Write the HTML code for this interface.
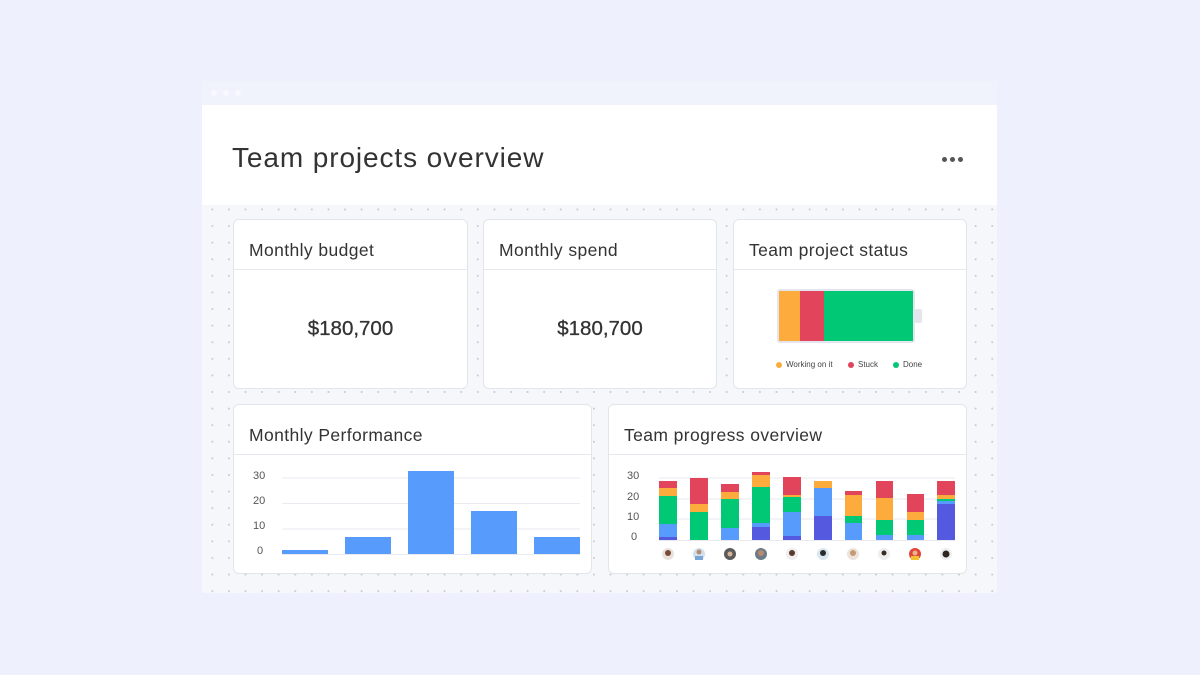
<!DOCTYPE html>
<html><head><meta charset="utf-8"><style>
*{margin:0;padding:0;box-sizing:border-box}
body{width:1200px;height:675px;background:#eef1fd;font-family:"Liberation Sans",sans-serif;color:#323338;position:relative;overflow:hidden}
.frame{position:absolute;left:202px;top:81px;width:795px;height:512px;background:#f6f7fb;background-image:radial-gradient(circle,#c9cbd6 0.8px,transparent 1.2px);background-size:16.6px 16.6px;background-position:2px 4px}
.topbar{position:absolute;left:202px;top:81px;width:795px;height:24px;background:#f0f3fc}
.dot{position:absolute;top:90px;width:6px;height:6px;border-radius:50%;background:#f8f9fe}
.header{position:absolute;left:202px;top:105px;width:795px;height:100px;background:#fff}
.title{position:absolute;left:232px;top:142px;font-size:28px;font-weight:300;letter-spacing:0.9px;color:#333}
.md{position:absolute;top:157px;width:5px;height:5px;border-radius:50%;background:#555}
.card{position:absolute;background:#fff;border:1px solid #e3e5ec;border-radius:6px}
.card h3{position:absolute;left:15px;top:20px;font-size:17.5px;font-weight:400;color:#333;letter-spacing:0.4px;white-space:nowrap}
.card .hr{position:absolute;left:0;right:0;top:49px;height:1px;background:#e6e8ee}
.val{position:absolute;left:0;right:0;top:97px;text-align:center;font-size:20.5px;color:#333;-webkit-text-stroke:0.3px #333}
.lg{position:absolute;top:360px;font-size:8px;color:#444}
.lg i{display:inline-block;width:6px;height:6px;border-radius:50%;margin-right:4px;vertical-align:-0.5px}
</style></head><body>
<div class="frame"></div>
<div class="topbar"></div>
<div class="dot" style="left:211px"></div><div class="dot" style="left:223px"></div><div class="dot" style="left:235px"></div>
<div class="header"></div>
<div class="title">Team projects overview</div>
<div class="md" style="left:942px"></div><div class="md" style="left:950px"></div><div class="md" style="left:958px"></div>

<div class="card" style="left:233px;top:219px;width:235px;height:170px"><h3>Monthly budget</h3><div class="hr"></div><div class="val">$180,700</div></div>
<div class="card" style="left:483px;top:219px;width:234px;height:170px"><h3>Monthly spend</h3><div class="hr"></div><div class="val">$180,700</div></div>
<div class="card" style="left:733px;top:219px;width:234px;height:170px"><h3>Team project status</h3><div class="hr"></div></div>
<svg style="position:absolute;left:0;top:0" width="1200" height="675">
<rect x="777" y="289" width="138" height="54" rx="3" fill="#e4e6ee"/>
<rect x="779" y="291" width="21" height="50" fill="#fdab3d"/>
<rect x="800" y="291" width="24" height="50" fill="#e2445c"/>
<rect x="824" y="291" width="89" height="50" fill="#00c875"/>
<rect x="914" y="309" width="8" height="14" rx="2" fill="#e4e6ee"/>
</svg>
<div class="lg" style="left:776px"><i style="background:#fdab3d"></i>Working on it</div>
<div class="lg" style="left:848px"><i style="background:#e2445c"></i>Stuck</div>
<div class="lg" style="left:893px"><i style="background:#00c875"></i>Done</div>

<div class="card" style="left:233px;top:404px;width:359px;height:170px"><h3>Monthly Performance</h3><div class="hr"></div></div>
<div class="card" style="left:608px;top:404px;width:359px;height:170px"><h3>Team progress overview</h3><div class="hr"></div></div>

<svg style="position:absolute;left:0;top:0" width="1200" height="675" font-family="Liberation Sans, sans-serif" font-size="11" fill="#555">
<g stroke="#e8eaf0" stroke-width="1">
<line x1="282" x2="580" y1="478" y2="478"/><line x1="282" x2="580" y1="503.5" y2="503.5"/><line x1="282" x2="580" y1="529" y2="529"/><line x1="282" x2="580" y1="554.5" y2="554.5"/>
</g>
<text x="253" y="479">30</text><text x="253" y="504">20</text><text x="253" y="529">10</text><text x="257" y="554">0</text>
<g fill="#579bfc">
<rect x="282" y="550" width="46" height="4"/>
<rect x="345" y="537" width="46" height="17"/>
<rect x="408" y="471" width="46" height="83"/>
<rect x="471" y="511" width="46" height="43"/>
<rect x="534" y="537" width="46" height="17"/>
</g>
<g stroke="#e8eaf0"><line x1="659" x2="955" y1="478" y2="478"/><line x1="659" x2="955" y1="499" y2="499"/><line x1="659" x2="955" y1="519" y2="519"/><line x1="659" x2="955" y1="540.5" y2="540.5"/></g>
<text x="627" y="479">30</text><text x="627" y="500">20</text><text x="627" y="520">10</text><text x="631" y="540">0</text>
</svg>
<svg style="position:absolute;left:0;top:0" width="1200" height="675">
<rect x="659" y="481" width="18" height="7" fill="#e2445c"/><rect x="659" y="488" width="18" height="8" fill="#fdab3d"/><rect x="659" y="496" width="18" height="28" fill="#00c875"/><rect x="659" y="524" width="18" height="13" fill="#579bfc"/><rect x="659" y="537" width="18" height="3" fill="#5559df"/>
<rect x="690" y="478" width="18" height="26" fill="#e2445c"/><rect x="690" y="504" width="18" height="8" fill="#fdab3d"/><rect x="690" y="512" width="18" height="28" fill="#00c875"/>
<rect x="721" y="484" width="18" height="8" fill="#e2445c"/><rect x="721" y="492" width="18" height="7" fill="#fdab3d"/><rect x="721" y="499" width="18" height="29" fill="#00c875"/><rect x="721" y="528" width="18" height="12" fill="#579bfc"/>
<rect x="752" y="472" width="18" height="3" fill="#e2445c"/><rect x="752" y="475" width="18" height="12" fill="#fdab3d"/><rect x="752" y="487" width="18" height="36" fill="#00c875"/><rect x="752" y="523" width="18" height="4" fill="#579bfc"/><rect x="752" y="527" width="18" height="13" fill="#5559df"/>
<rect x="783" y="477" width="18" height="18" fill="#e2445c"/><rect x="783" y="495" width="18" height="2" fill="#fdab3d"/><rect x="783" y="497" width="18" height="15" fill="#00c875"/><rect x="783" y="512" width="18" height="24" fill="#579bfc"/><rect x="783" y="536" width="18" height="4" fill="#5559df"/>
<rect x="814" y="481" width="18" height="7" fill="#fdab3d"/><rect x="814" y="488" width="18" height="28" fill="#579bfc"/><rect x="814" y="516" width="18" height="24" fill="#5559df"/>
<rect x="845" y="491" width="17" height="4" fill="#e2445c"/><rect x="845" y="495" width="17" height="21" fill="#fdab3d"/><rect x="845" y="516" width="17" height="7" fill="#00c875"/><rect x="845" y="523" width="17" height="17" fill="#579bfc"/>
<rect x="876" y="481" width="17" height="17" fill="#e2445c"/><rect x="876" y="498" width="17" height="22" fill="#fdab3d"/><rect x="876" y="520" width="17" height="15" fill="#00c875"/><rect x="876" y="535" width="17" height="5" fill="#579bfc"/>
<rect x="907" y="494" width="17" height="18" fill="#e2445c"/><rect x="907" y="512" width="17" height="8" fill="#fdab3d"/><rect x="907" y="520" width="17" height="15" fill="#00c875"/><rect x="907" y="535" width="17" height="5" fill="#579bfc"/>
<rect x="937" y="481" width="18" height="14" fill="#e2445c"/><rect x="937" y="495" width="18" height="4" fill="#fdab3d"/><rect x="937" y="499" width="18" height="2" fill="#00c875"/><rect x="937" y="501" width="18" height="3" fill="#579bfc"/><rect x="937" y="504" width="18" height="36" fill="#5559df"/>
<g>
<circle cx="668" cy="554" r="6" fill="#e9e2dc"/><circle cx="668" cy="553" r="3" fill="#7a4a36"/>
<circle cx="699" cy="554" r="6" fill="#cfe0ee"/><circle cx="699" cy="552" r="2.5" fill="#b98b70"/><rect x="695" y="556" width="8" height="4" fill="#7aa6d6"/>
<circle cx="730" cy="554" r="6" fill="#5b5b5b"/><circle cx="730" cy="554" r="2.5" fill="#d7b39a"/>
<circle cx="761" cy="554" r="6" fill="#6d7b88"/><circle cx="761" cy="553" r="3" fill="#b68a6a"/>
<circle cx="792" cy="554" r="6" fill="#eee"/><circle cx="792" cy="553" r="3" fill="#5a3a2c"/>
<circle cx="823" cy="554" r="6" fill="#d8e8ee"/><circle cx="823" cy="553" r="3" fill="#2b2b2b"/>
<circle cx="853" cy="554" r="6" fill="#ece4dc"/><circle cx="853" cy="553" r="3" fill="#c49a72"/>
<circle cx="884" cy="554" r="6" fill="#eee"/><circle cx="884" cy="553" r="2.5" fill="#3a2a22"/>
<circle cx="915" cy="554" r="6" fill="#e2443c"/><circle cx="915" cy="553" r="2.5" fill="#e9b48a"/><rect x="911" y="556" width="8" height="4" fill="#f2c230"/>
<circle cx="946" cy="554" r="6" fill="#eee"/><circle cx="946" cy="554" r="3.5" fill="#2e2420"/>
</g>
</svg>
</body></html>
